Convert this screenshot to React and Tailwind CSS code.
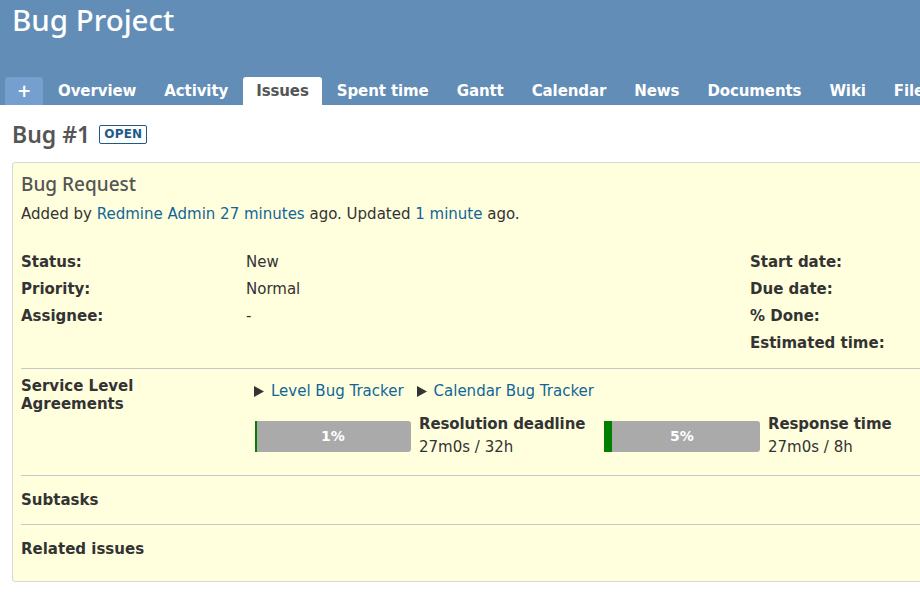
import React from "react";

const tabs = ["Overview", "Activity", "Issues", "Spent time", "Gantt", "Calendar", "News", "Documents", "Wiki", "Files"];

function Tri() {
  return (
    <svg width="10" height="11" viewBox="0 0 10 11" className="shrink-0">
      <polygon points="0,0 10,5.5 0,11" fill="#333" />
    </svg>
  );
}

function Bar({ pct, title, value }) {
  return (
    <div className="flex w-[349px] shrink-0">
      <div className="relative w-[156px] h-[31px] bg-[#aaaaaa] rounded-r-[3px] overflow-hidden shrink-0">
        <div className="absolute left-0 top-0 bottom-0 bg-[#008000]" style={{ width: `${pct}%` }} />
        <div className="relative text-center text-white font-bold text-[14px] leading-[31px]">{pct}%</div>
      </div>
      <div className="ml-[8px] -mt-[7px]">
        <div className="font-bold text-[15px] leading-[20px] text-[#333] tracking-[-0.1px]">{title}</div>
        <div className="text-[15px] leading-[27px] text-[#333]">{value}</div>
      </div>
    </div>
  );
}

export default function App() {
  const leftAttrs = [["Status:", "New"], ["Priority:", "Normal"], ["Assignee:", "-"]];
  const rightAttrs = ["Start date:", "Due date:", "% Done:", "Estimated time:"];
  return (
    <div className="w-[920px] h-[598px] overflow-hidden bg-white font-['DejaVu_Sans',sans-serif] text-[#333]">
      <div className="bg-[#628db6] h-[105px] flex flex-col justify-between">
        <h1 className="pl-[12px] text-[29.5px] leading-[40px] text-white font-['Noto_Sans',sans-serif] font-medium whitespace-nowrap">
          Bug Project
        </h1>
        <div className="flex pl-[5px] gap-[2px] whitespace-nowrap">
          <div className="h-[28px] w-[38px] bg-[#759fcf] rounded-t-[3px] text-white font-bold text-[17px] leading-[28px] text-center shrink-0">+</div>
          {tabs.map((t) => (
            <div
              key={t}
              className={
                t === "Issues"
                  ? "h-[28px] px-[13px] bg-white text-[#555] rounded-t-[3px] font-bold text-[15px] leading-[28px] tracking-[-0.1px] shrink-0"
                  : "h-[28px] px-[13px] text-white font-bold text-[15px] leading-[28px] tracking-[-0.1px] shrink-0"
              }
            >
              {t}
            </div>
          ))}
        </div>
      </div>

      <div className="pl-[12px]">
        <div className="flex items-center mt-[14px] h-[30px]">
          <h2 className="font-['Noto_Sans',sans-serif] font-semibold text-[23px] leading-[30px] text-[#555]">Bug #1</h2>
          <span className="ml-[9px] mt-[1px] border border-[#1d5a8a] rounded-[2px] px-[4px] text-[12px] leading-[17px] font-bold text-[#1d5a8a] tracking-[0.2px]">
            OPEN
          </span>
        </div>

        <div className="mt-[13px] w-[1200px] h-[420px] bg-[#ffffdd] border border-[#d7d7d7] rounded-[3px] pl-[8px] pt-[9px]">
          <div className="font-['Noto_Sans',sans-serif] font-medium text-[19px] leading-[24px] text-[#555]">Bug Request</div>
          <div className="mt-[8px] text-[15px] leading-[20px] whitespace-nowrap">
            Added by <span className="text-[#116699]">Redmine Admin</span> <span className="text-[#116699]">27 minutes</span> ago. Updated{" "}
            <span className="text-[#116699]">1 minute</span> ago.
          </div>

          <div className="mt-[25px] flex text-[15px] leading-[27px]">
            <div className="w-[729px] shrink-0">
              {leftAttrs.map(([k, v]) => (
                <div key={k} className="flex">
                  <div className="w-[225px] font-bold">{k}</div>
                  <div>{v}</div>
                </div>
              ))}
            </div>
            <div>
              {rightAttrs.map((k) => (
                <div key={k} className="font-bold">{k}</div>
              ))}
            </div>
          </div>

          <div className="mt-[11px] h-px bg-[#c8c8c8]" />

          <div className="flex pt-[9px] pb-[14px]">
            <div className="w-[225px] shrink-0 font-bold text-[15px] leading-[18px] -mt-[1px]">
              <div className="w-[130px]">Service Level Agreements</div>
            </div>
            <div className="pl-[8px]">
              <div className="flex items-center h-[24px] mt-[1px] text-[15px] whitespace-nowrap">
                <Tri />
                <span className="ml-[7px] text-[#116699]">Level Bug Tracker</span>
                <span className="ml-[13px] flex"><Tri /></span>
                <span className="ml-[7px] text-[#116699]">Calendar Bug Tracker</span>
              </div>
              <div className="flex mt-[18px] ml-[1px]">
                <Bar pct={1} title="Resolution deadline" value="27m0s / 32h" />
                <Bar pct={5} title="Response time" value="27m0s / 8h" />
              </div>
            </div>
          </div>

          <div className="h-px bg-[#c8c8c8]" />
          <div className="font-bold text-[15px] leading-[48px]">Subtasks</div>
          <div className="h-px bg-[#c8c8c8]" />
          <div className="font-bold text-[15px] leading-[48px]">Related issues</div>
        </div>
      </div>
    </div>
  );
}
